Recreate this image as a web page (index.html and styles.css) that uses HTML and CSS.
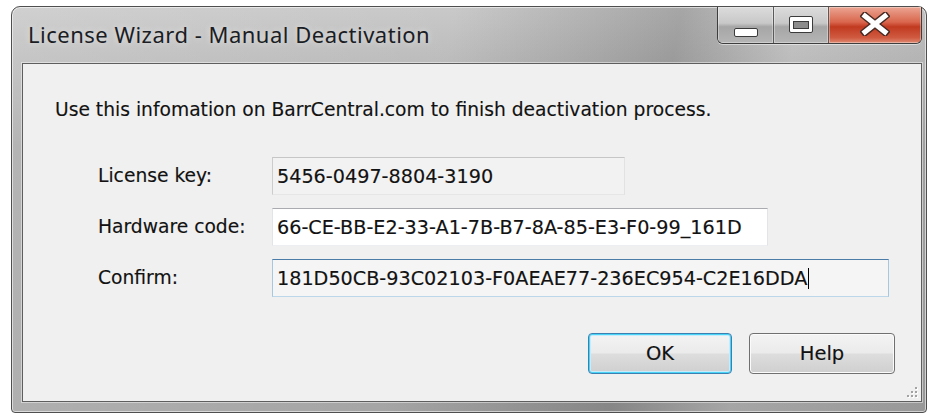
FILE: index.html
```html
<!DOCTYPE html>
<html lang="en">
<head>
<meta charset="utf-8">
<title>License Wizard - Manual Deactivation</title>
<link rel="stylesheet" href="styles.css">
</head>
<body>
<div class="window">
  <div class="titlebar">
    <div class="title">License Wizard - Manual Deactivation</div>
    <div class="caption-buttons">
      <div class="cap-btn cap-min">
        <svg width="24" height="9" viewBox="0 0 24 9"><rect x="0.5" y="0.5" width="23" height="8" rx="1.5" fill="#fff" stroke="#3b3b3b"/></svg>
      </div>
      <div class="cap-btn cap-max">
        <svg width="24" height="17" viewBox="0 0 24 17"><rect x="0.5" y="0.5" width="23" height="16" rx="1.5" fill="#fff" stroke="#3b3b3b"/><rect x="4.5" y="5.5" width="15" height="7" fill="#8c8c8c" stroke="#3b3b3b"/></svg>
      </div>
      <div class="cap-btn cap-close">
        <svg width="30" height="24" viewBox="0 0 30 24"><path d="M5 4 L25 20 M25 4 L5 20" stroke="#4a2a22" stroke-width="8" stroke-linecap="square" fill="none"/><path d="M5 4 L25 20 M25 4 L5 20" stroke="#fff" stroke-width="5" stroke-linecap="square" fill="none"/></svg>
      </div>
    </div>
  </div>
  <div class="client">
    <p class="intro">Use this infomation on BarrCentral.com to finish deactivation process.</p>
    <div class="form">
      <label class="label">License key:</label>
      <div class="field field-disabled field-key">5456-0497-8804-3190</div>
      <label class="label">Hardware code:</label>
      <div class="field field-hw">66-CE-BB-E2-33-A1-7B-B7-8A-85-E3-F0-99_161D</div>
      <label class="label">Confirm:</label>
      <div class="field field-focus field-confirm">181D50CB-93C02103-F0AEAE77-236EC954-C2E16DDA<span class="caret"></span></div>
    </div>
    <div class="actions">
      <button class="btn btn-default btn-ok">OK</button>
      <button class="btn btn-help">Help</button>
    </div>
    <svg class="size-grip" width="14" height="14" viewBox="0 0 14 14">
      <g fill="#fff"><rect x="11" y="3" width="2" height="2"/><rect x="7" y="7" width="2" height="2"/><rect x="11" y="7" width="2" height="2"/><rect x="3" y="11" width="2" height="2"/><rect x="7" y="11" width="2" height="2"/><rect x="11" y="11" width="2" height="2"/></g>
      <g fill="#a3a3a3"><rect x="10" y="2" width="2" height="2"/><rect x="6" y="6" width="2" height="2"/><rect x="10" y="6" width="2" height="2"/><rect x="2" y="10" width="2" height="2"/><rect x="6" y="10" width="2" height="2"/><rect x="10" y="10" width="2" height="2"/></g>
    </svg>
  </div>
</div>
</body>
</html>
```

FILE: styles.css
```css
* {
  box-sizing: border-box;
}

html, body {
  margin: 0;
  padding: 0;
  background: #ffffff;
}

body {
  font-family: "DejaVu Sans", "Liberation Sans", sans-serif;
  font-size: 18.7px;
  color: #121212;
  -webkit-text-stroke: 0.15px #121212;
}

/* Outer window frame */
.window {
  margin: 6px 0 0 11px;
  width: 916px;
  height: 407px;
  border: 1px solid #4f4f4f;
  border-radius: 9px 9px 4px 4px;
  padding: 0 4px 10px 10px;
  display: flex;
  flex-direction: column;
  background:
    linear-gradient(100deg, rgba(255,255,255,0.18) 0%, rgba(255,255,255,0.05) 45%, rgba(0,0,0,0.16) 68%, rgba(255,255,255,0.06) 80%, rgba(0,0,0,0.05) 100%),
    linear-gradient(to bottom, #c6c6c6 0, #b8b8b8 56px, #a5a5a5 140px, #a0a0a0 100%);
  box-shadow: inset 0 0 0 1px rgba(255,255,255,0.55);
}

.titlebar {
  height: 56px;
  display: flex;
  justify-content: space-between;
  align-items: flex-start;
}

.title {
  align-self: center;
  margin-left: 6px;
  margin-top: -2px;
  font-family: "Noto Sans", "Open Sans", sans-serif;
  font-size: 22px;
  letter-spacing: 0.5px;
  color: #1b1d24;
  -webkit-text-stroke: 0;
  text-shadow: 0 0 6px rgba(255,255,255,0.6);
}

/* Minimise / maximise / close group */
.caption-buttons {
  display: flex;
  width: 205px;
  height: 37px;
  border: 1px solid #3e3e3e;
  border-top: none;
  border-radius: 0 0 6px 6px;
  overflow: hidden;
  box-shadow: 0 1px 0 rgba(255,255,255,0.5);
}

.cap-btn {
  display: flex;
  align-items: center;
  justify-content: center;
  box-shadow: inset 0 0 0 1px rgba(255,255,255,0.35);
}

.cap-min,
.cap-max {
  background: linear-gradient(to bottom, #dcdcdc 0%, #c8c8c8 45%, #a6a6a6 55%, #b5b5b5 100%);
  border-right: 1px solid #5a5a5a;
}

.cap-min {
  width: 56px;
  padding-top: 14px;
}

.cap-max {
  width: 55px;
  padding-bottom: 2px;
}

.cap-close {
  flex: 1;
  background: linear-gradient(to bottom, #eba593 0%, #d9664d 42%, #c13a20 55%, #cf5a40 85%, #e08a72 100%);
  padding-bottom: 3px;
}

/* Dialog client area */
.client {
  position: relative;
  flex: 1;
  background: #f0f0f0;
  border: 1px solid #5e5e5e;
  box-shadow: 0 0 0 1px rgba(255,255,255,0.45);
  padding-top: 35px;
}

.intro {
  margin: 0 0 0 32px;
  line-height: 22px;
  white-space: nowrap;
}

.form {
  margin-top: 36px;
  padding-left: 75px;
  display: grid;
  grid-template-columns: 174px auto;
  grid-auto-rows: 38px;
  row-gap: 13px;
  align-items: center;
  justify-items: start;
}

.label {
  line-height: 22px;
}

.field {
  height: 38px;
  display: flex;
  align-items: center;
  padding-left: 4px;
  font-size: 19.2px;
  white-space: nowrap;
  border: 1px solid;
}

.field-disabled {
  background: #f2f2f2;
  border-color: #c6c6c6 #e2e2e2 #e6e6e6 #cccccc;
}

.field-hw {
  background: #ffffff;
  border-color: #a9abb0 #e3e4e8 #eceef1 #e3e4e8;
}

.field-focus {
  background: #f5f5f5;
  border-color: #4b7ba7 #a7c6df #bcd6ea #a7c6df;
}

.field-key { width: 353px; }
.field-hw { width: 496px; }
.field-confirm { width: 617px; }

.caret {
  display: inline-block;
  width: 0;
  height: 21px;
  border-left: 1.5px solid #000;
  margin-left: 1px;
}

.actions {
  margin-top: 36px;
  display: flex;
  justify-content: flex-end;
  gap: 17px;
  padding-right: 26px;
}

.btn {
  height: 41px;
  font: inherit;
  font-size: 19.5px;
  color: #121212;
  border: 1px solid #707070;
  border-radius: 4px;
  background: linear-gradient(to bottom, #f3f3f3 0%, #ebebeb 48%, #dddddd 52%, #cfcfcf 100%);
  box-shadow: inset 0 0 0 1px #fbfbfb;
  padding: 0;
}

.btn-ok { width: 144px; }
.btn-help { width: 146px; }

.btn-default {
  border-color: #3c7fb1;
  box-shadow: inset 0 0 0 1px #48d4f7, inset 0 0 0 2px #c6ecfb;
}

.size-grip {
  position: absolute;
  right: 2px;
  bottom: 2px;
}
```
